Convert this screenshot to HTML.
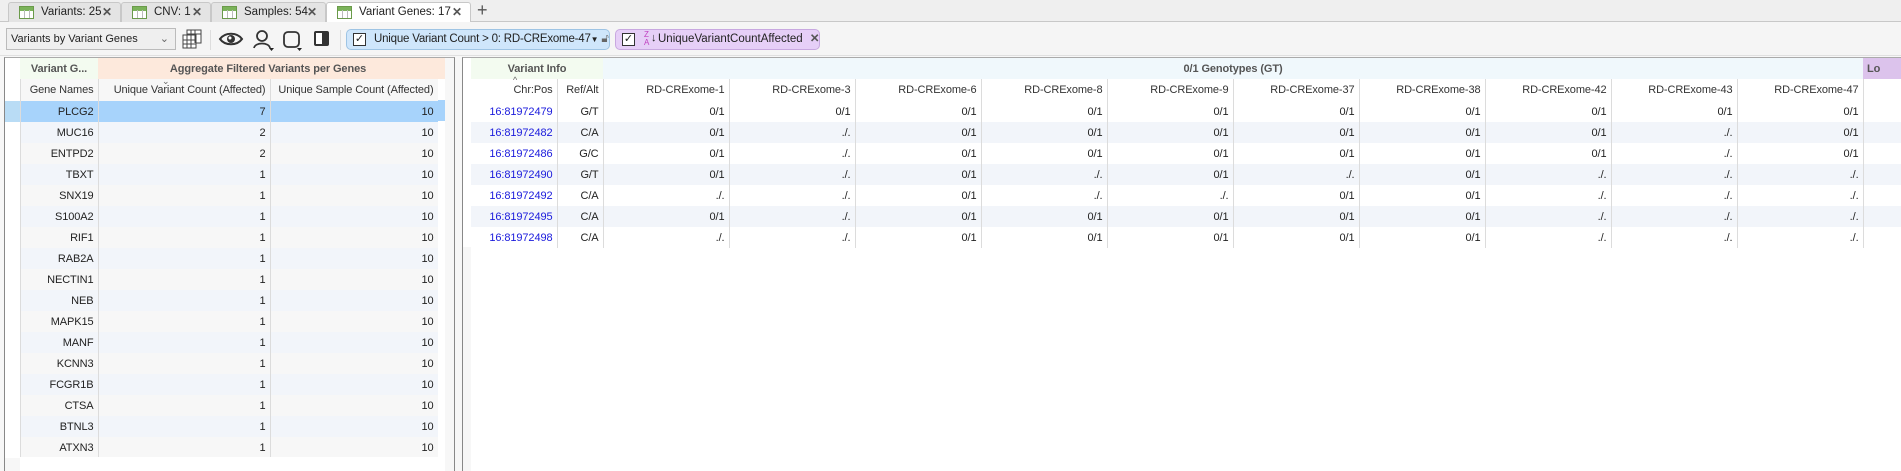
<!DOCTYPE html>
<html><head><meta charset="utf-8"><style>
*{box-sizing:border-box;margin:0;padding:0}
body{width:1901px;height:471px;overflow:hidden;background:#f7f7f7;font-family:"Liberation Sans",sans-serif;font-size:11px;color:#222;position:relative}
.a{position:absolute;white-space:nowrap}
.tab{position:absolute;top:2px;height:20px;background:#e4e4e4;border:1px solid #c8c8c8;border-bottom:none;border-radius:3px 3px 0 0;font-size:11.5px;line-height:19px;padding-left:32px;white-space:nowrap}
.ico{position:absolute;left:10px;top:3px;width:15px;height:13px;border:1px solid #6a9a4a;background:linear-gradient(#7bb35a 0 4px,#fff 4px);}
.ico:after{content:"";position:absolute;left:4px;top:3px;width:4px;height:8px;border-left:1px solid #bbb;border-right:1px solid #bbb}
.x{position:absolute;right:8px;top:0;font-weight:bold;color:#555;font-size:12px}
table{border-collapse:collapse;table-layout:fixed}
td{height:21px;padding:0 4px;text-align:right;white-space:nowrap;overflow:hidden;border-right:1px solid #dcdcdc;letter-spacing:-0.1px}
tr.o td{background:#f2f5fa}
tr.s td{background:#a7d3fb}
.l td.rh{background:#fff}
tr.s td.rh{background:#b9dcf5}
.hd td{height:22px;color:#333}
.gh td{height:21px;font-weight:bold;color:#555;text-align:center;border-right:none}
a{color:#1a1adc;text-decoration:none}
</style></head><body>
<div class="a" style="left:0;top:0;width:1901px;height:22px;background:#efefef;border-bottom:1px solid #c8c8c8"></div>
<div class="tab" style="left:8px;width:113px"><span class="ico"></span>Variants: 25<span class="x">✕</span></div>
<div class="tab" style="left:121px;width:90px"><span class="ico"></span>CNV: 1<span class="x">✕</span></div>
<div class="tab" style="left:211px;width:115px"><span class="ico"></span>Samples: 54<span class="x">✕</span></div>
<div class="tab" style="left:326px;width:145px;background:#fff;height:21px"><span class="ico"></span>Variant Genes: 17<span class="x">✕</span></div>
<div class="a" style="left:477px;top:0;font-size:18px;color:#555;line-height:20px">+</div>
<div class="a" style="left:0;top:22px;width:1901px;height:34px;background:#f5f5f5;border-bottom:1px solid #e0e0e0"></div>
<div class="a" style="left:6px;top:28px;width:170px;height:22px;border:1px solid #bbb;background:#efefef;padding-left:4px;line-height:20px">Variants by Variant Genes<span style="position:absolute;right:6px;color:#666">⌄</span></div>
<svg class="a" style="left:181px;top:28px" width="24" height="22"><rect x="6" y="2" width="14" height="13" fill="#fff" stroke="#444"/><rect x="2" y="7" width="13" height="13" fill="#fff" stroke="#444"/><path d="M6 7v13M10 7v13M2 12h13M2 16h13M10 2v5M14 2v13M6 6h14" stroke="#444" fill="none"/></svg>
<div class="a" style="left:210px;top:30px;width:1px;height:20px;background:#ddd"></div>
<svg class="a" style="left:218px;top:30px" width="26" height="18"><path d="M2 9C7 2 19 2 24 9C19 16 7 16 2 9Z" fill="none" stroke="#333" stroke-width="2"/><circle cx="13" cy="9" r="4" fill="#333"/><circle cx="12" cy="8" r="1.5" fill="#fff"/></svg>
<svg class="a" style="left:252px;top:29px" width="24" height="22"><circle cx="10" cy="7" r="5" fill="none" stroke="#333" stroke-width="1.8"/><path d="M2 19C3 13 17 13 18 19" fill="none" stroke="#333" stroke-width="1.8"/><path d="M17 19h5l-2.5 3z" fill="#222"/></svg>
<svg class="a" style="left:282px;top:29px" width="24" height="22"><rect x="2" y="3" width="15" height="15" rx="4" fill="none" stroke="#333" stroke-width="1.8"/><path d="M15 19h5l-2.5 3z" fill="#222"/></svg>
<svg class="a" style="left:313px;top:30px" width="18" height="18"><rect x="1" y="1" width="15" height="15" rx="2" fill="#333"/><rect x="3" y="3" width="6" height="11" fill="#fff"/></svg>
<div class="a" style="left:340px;top:30px;width:1px;height:20px;background:#ddd"></div>
<div class="a" style="left:346px;top:29px;width:264px;height:21px;background:#cfe6fb;border:1px solid #9ec4e4;border-radius:5px;line-height:19px;padding-left:27px;font-size:11.5px;letter-spacing:-0.2px">Unique Variant Count &gt; 0: RD-CRExome-47<span style="font-size:8px">▼</span> <span style="color:#666">🔓︎</span></div>
<div class="a" style="left:353px;top:33px;width:13px;height:13px;border:1px solid #333;background:#fff;font-size:11px;line-height:11px;text-align:center">✓</div>
<div class="a" style="left:615px;top:29px;width:205px;height:21px;background:#e6cff7;border:1px solid #c8a8e0;border-radius:5px;line-height:19px;padding-left:42px;font-size:11.5px">UniqueVariantCountAffected <b style="color:#555;margin-left:4px">✕</b></div>
<div class="a" style="left:622px;top:33px;width:13px;height:13px;border:1px solid #333;background:#fff;font-size:11px;line-height:11px;text-align:center">✓</div>
<div class="a" style="left:644px;top:31px;font-size:8px;line-height:8px;color:#c040c0">Z<br>A</div>
<div class="a" style="left:651px;top:32px;font-size:11px">↓</div>

<!-- left panel -->
<div class="a" style="left:4px;top:57px;width:451px;height:414px;background:#f7f7f7;border-left:1px solid #888;border-top:1px solid #aaa;border-right:1px solid #888"></div>
<div class="a" style="left:5px;top:58px;width:15px;height:400px;background:#fff"></div>
<table class="a l" style="left:5px;top:58px;width:433px">
<colgroup><col style="width:15px"><col style="width:78px"><col style="width:172px"><col style="width:168px"></colgroup>
<tr class="gh"><td style="background:#fff"></td><td style="background:#f3fbf0">Variant G...</td><td colspan="2" style="background:#fde9dc">Aggregate Filtered Variants per Genes</td></tr>
<tr class="hd"><td class="rh"></td><td>Gene Names</td><td>Unique Variant Count (Affected)</td><td>Unique Sample Count (Affected)</td></tr>
<tr class="s"><td class="rh"></td><td>PLCG2</td><td>7</td><td>10</td></tr>
<tr class="o"><td class="rh"></td><td>MUC16</td><td>2</td><td>10</td></tr>
<tr><td class="rh"></td><td>ENTPD2</td><td>2</td><td>10</td></tr>
<tr class="o"><td class="rh"></td><td>TBXT</td><td>1</td><td>10</td></tr>
<tr><td class="rh"></td><td>SNX19</td><td>1</td><td>10</td></tr>
<tr class="o"><td class="rh"></td><td>S100A2</td><td>1</td><td>10</td></tr>
<tr><td class="rh"></td><td>RIF1</td><td>1</td><td>10</td></tr>
<tr class="o"><td class="rh"></td><td>RAB2A</td><td>1</td><td>10</td></tr>
<tr><td class="rh"></td><td>NECTIN1</td><td>1</td><td>10</td></tr>
<tr class="o"><td class="rh"></td><td>NEB</td><td>1</td><td>10</td></tr>
<tr><td class="rh"></td><td>MAPK15</td><td>1</td><td>10</td></tr>
<tr class="o"><td class="rh"></td><td>MANF</td><td>1</td><td>10</td></tr>
<tr><td class="rh"></td><td>KCNN3</td><td>1</td><td>10</td></tr>
<tr class="o"><td class="rh"></td><td>FCGR1B</td><td>1</td><td>10</td></tr>
<tr><td class="rh"></td><td>CTSA</td><td>1</td><td>10</td></tr>
<tr class="o"><td class="rh"></td><td>BTNL3</td><td>1</td><td>10</td></tr>
<tr><td class="rh"></td><td>ATXN3</td><td>1</td><td>10</td></tr>
</table>
<div class="a" style="left:438px;top:58px;width:7px;height:21px;background:#fde9dc"></div>
<div class="a" style="left:438px;top:79px;width:7px;height:378px;background:#fff"></div>
<div class="a" style="left:438px;top:100px;width:7px;height:21px;background:#a7d3fb"></div>
<div class="a" style="left:20px;top:457px;width:425px;height:14px;background:#fff"></div>
<div class="a" style="left:162px;top:76px;font-size:9px;color:#666">⌄</div>

<!-- right panel -->
<div class="a" style="left:462px;top:57px;width:1439px;height:414px;background:#fff;border-left:1px solid #888;border-top:1px solid #aaa"></div>
<div class="a" style="left:463px;top:58px;width:8px;height:413px;background:#fff"></div>
<div class="a" style="left:463px;top:247px;width:8px;height:224px;background:#f7f7f7"></div>
<table class="a" style="left:471px;top:58px;width:1430px">
<colgroup><col style="width:86px"><col style="width:46px"><col span="10" style="width:126px"><col style="width:38px"></colgroup>
<tr class="gh"><td colspan="2" style="background:#f3fbf0">Variant Info</td><td colspan="10" style="background:#f0f8fc">0/1 Genotypes (GT)</td><td style="background:#dcc3ec;text-align:left">Lo</td></tr>
<tr class="hd"><td>Chr:Pos</td><td>Ref/Alt</td><td>RD-CRExome-1</td><td>RD-CRExome-3</td><td>RD-CRExome-6</td><td>RD-CRExome-8</td><td>RD-CRExome-9</td><td>RD-CRExome-37</td><td>RD-CRExome-38</td><td>RD-CRExome-42</td><td>RD-CRExome-43</td><td>RD-CRExome-47</td><td style="border:none"></td></tr>
<tr><td><a>16:81972479</a></td><td>G/T</td><td>0/1</td><td>0/1</td><td>0/1</td><td>0/1</td><td>0/1</td><td>0/1</td><td>0/1</td><td>0/1</td><td>0/1</td><td>0/1</td><td style="border:none"></td></tr>
<tr class="o"><td><a>16:81972482</a></td><td>C/A</td><td>0/1</td><td>./.</td><td>0/1</td><td>0/1</td><td>0/1</td><td>0/1</td><td>0/1</td><td>0/1</td><td>./.</td><td>0/1</td><td style="border:none"></td></tr>
<tr><td><a>16:81972486</a></td><td>G/C</td><td>0/1</td><td>./.</td><td>0/1</td><td>0/1</td><td>0/1</td><td>0/1</td><td>0/1</td><td>0/1</td><td>./.</td><td>0/1</td><td style="border:none"></td></tr>
<tr class="o"><td><a>16:81972490</a></td><td>G/T</td><td>0/1</td><td>./.</td><td>0/1</td><td>./.</td><td>0/1</td><td>./.</td><td>0/1</td><td>./.</td><td>./.</td><td>./.</td><td style="border:none"></td></tr>
<tr><td><a>16:81972492</a></td><td>C/A</td><td>./.</td><td>./.</td><td>0/1</td><td>./.</td><td>./.</td><td>0/1</td><td>0/1</td><td>./.</td><td>./.</td><td>./.</td><td style="border:none"></td></tr>
<tr class="o"><td><a>16:81972495</a></td><td>C/A</td><td>0/1</td><td>./.</td><td>0/1</td><td>0/1</td><td>0/1</td><td>0/1</td><td>0/1</td><td>./.</td><td>./.</td><td>./.</td><td style="border:none"></td></tr>
<tr><td><a>16:81972498</a></td><td>C/A</td><td>./.</td><td>./.</td><td>0/1</td><td>0/1</td><td>0/1</td><td>0/1</td><td>0/1</td><td>./.</td><td>./.</td><td>./.</td><td style="border:none"></td></tr>
</table>
<div class="a" style="left:513px;top:75px;font-size:9px;color:#666">^</div>
</body></html>
